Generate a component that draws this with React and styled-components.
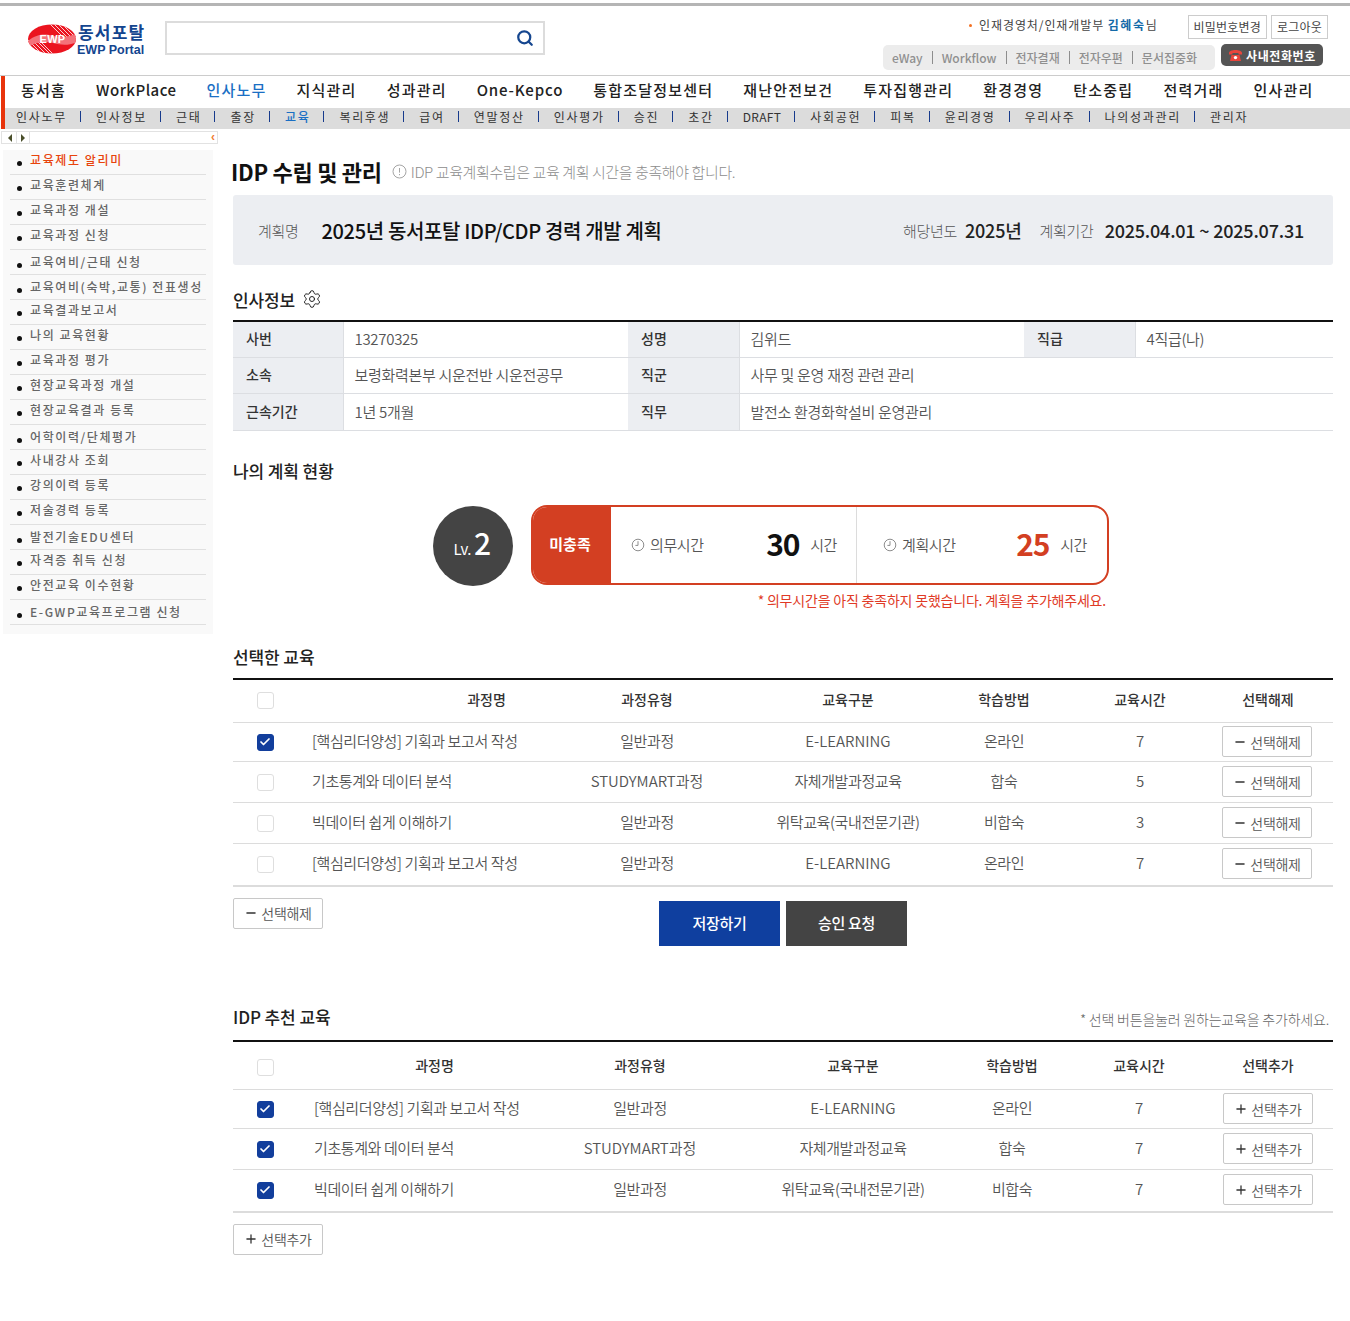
import React from 'react';
import styled, { createGlobalStyle } from 'styled-components';
import { Search, Settings, Check, Minus, Plus } from 'lucide-react';

const NOTO = `"Noto Sans CJK KR", "Noto Sans", sans-serif`;

const GlobalStyle = createGlobalStyle`
  html, body { margin: 0; padding: 0; background: #fff; }
  body { font-family: ${NOTO}; color: #333; }
  * { box-sizing: border-box; }
  table { border-collapse: collapse; }
`;

const Page = styled.div`
  width: 1350px;
  height: 1321px;
  overflow: hidden;
`;

/* header */
const Header = styled.header`
  height: 76px;
  border-top: 3px solid #fff;
  border-bottom: 1px solid #ccc;
  position: relative;
  display: flex;
  justify-content: space-between;
  &::before {
    content: '';
    position: absolute;
    left: 0;
    right: 0;
    top: 0;
    height: 3px;
    background: #b5b5b5;
  }
`;

const HeaderLeft = styled.div`
  display: flex;
  padding: 18px 0 0 28px;
`;

const Logo = styled.div`
  display: flex;
  width: 137px;
  height: 34px;
  margin-top: 3px;
`;

const LogoText = styled.div`
  display: flex;
  flex-direction: column;
  color: #13458f;
  font-weight: 700;
  font-family: "Liberation Sans", ${NOTO};
`;

const LogoKo = styled.span`
  font-family: ${NOTO};
  font-size: 17px;
  line-height: 20px;
  margin-top: -2px;
  margin-left: 1px;
  letter-spacing: 1.2px;
`;

const LogoEn = styled.span`
  font-size: 12.5px;
  line-height: 14px;
  margin-top: 1px;
  white-space: nowrap;
`;

const SearchBox = styled.div`
  width: 380px;
  height: 34px;
  border: 2px solid #dcdcdc;
  display: flex;
  align-items: center;
  justify-content: flex-end;
  padding-right: 9px;
  color: #15468f;
`;

const HeaderRight = styled.div`
  width: 400px;
  padding: 12px 22px 0 0;
  display: flex;
  flex-direction: column;
  align-items: flex-end;
`;

const UserLine = styled.div`
  display: flex;
  align-items: flex-start;
  height: 24px;
`;

const UserName = styled.div`
  font-size: 12px;
  line-height: 20px;
  color: #444;
  margin-right: 26px;
  letter-spacing: 0.9px;
  display: flex;
  align-items: center;
  &::before {
    content: '';
    width: 3px;
    height: 3px;
    border-radius: 50%;
    background: #f37021;
    margin-right: 7px;
  }
  b { color: #146aa8; font-weight: 700; letter-spacing: 1.6px; }
`;

const SmallBtn = styled.span`
  height: 24px;
  padding: 0 5px;
  margin-left: 4px;
  border: 1px solid #ccc;
  font-size: 12px;
  line-height: 22px;
  letter-spacing: 0.2px;
  color: #444;
  background: #fff;
  white-space: nowrap;
`;

const QuickLine = styled.div`
  display: flex;
  align-items: center;
  margin-top: 6px;
  margin-right: 5px;
`;

const QuickBar = styled.div`
  width: 332px;
  height: 25px;
  background: #ececec;
  border-radius: 5px;
  display: flex;
  align-items: center;
  padding-left: 9px;
  margin-right: 6px;
`;

const QuickItem = styled.span`
  font-size: 12px;
  font-weight: 500;
  color: #909090;
  white-space: nowrap;
  padding-right: 9px;
  margin-right: 9px;
  line-height: 13px;
  border-right: ${(p) => (p.$last ? 'none' : '1px solid #8d8d8d')};
`;

const PhoneBtn = styled.div`
  width: 102px;
  height: 22px;
  margin-top: -5px;
  background: #555;
  border-radius: 5px;
  color: #fff;
  font-size: 12px;
  font-weight: 700;
  letter-spacing: 0.6px;
  display: flex;
  align-items: center;
  padding-left: 7px;
  gap: 3px;
  white-space: nowrap;
`;

/* navigation */
const NavArea = styled.nav`
  margin-left: 1px;
  border-left: 4px solid #e8340c;
`;

const MainNav = styled.div`
  height: 32px;
  display: flex;
  align-items: center;
  padding: 0 0 5px 16px;
`;

const MainNavItem = styled.span`
  font-size: 15px;
  font-weight: 500;
  letter-spacing: ${(p) => p.$spacing}px;
  color: ${(p) => (p.$active ? '#1a6fc4' : '#222')};
  margin-right: 30px;
  white-space: nowrap;
  line-height: 24px;
`;

const SubNav = styled.div`
  height: 21px;
  background: #dcdcdc;
  display: flex;
  align-items: center;
  padding: 0 0 4px 11px;
`;

const SubNavItem = styled.span`
  font-size: 12px;
  letter-spacing: ${(p) => (p.$latin ? '0.3px' : '1.7px')};
  color: ${(p) => (p.$active ? '#1a6fc4' : '#333')};
  font-weight: ${(p) => (p.$active ? 500 : 400)};
  white-space: nowrap;
  line-height: 11px;
  padding-right: 13px;
  margin-right: 15px;
  border-right: ${(p) => (p.$last ? 'none' : '1px solid #173a8c')};
`;

/* body */
const Body = styled.div`
  display: flex;
  align-items: flex-start;
`;

const Aside = styled.aside`
  width: 233px;
  flex: none;
  padding: 2px 0 0 1px;
`;

const Toggle = styled.div`
  width: 217px;
  height: 13px;
  border: 1px solid #e2e2e2;
  display: flex;
  align-items: center;
  padding-left: 2px;
  position: relative;
`;

const ToggleCell = styled.span`
  width: 13px;
  height: 11px;
  display: flex;
  align-items: center;
  justify-content: center;
  border-right: 1px solid #e2e2e2;
`;

const ToggleArrow = styled.span`
  width: 0;
  height: 0;
  border-top: 4px solid transparent;
  border-bottom: 4px solid transparent;
  border-${(p) => (p.$left ? 'right' : 'left')}: 4px solid #4a4f2a;
`;

const Collapse = styled.span`
  position: absolute;
  right: 2px;
  top: -1px;
  font-size: 12px;
  font-weight: 700;
  line-height: 12px;
  color: #f07b32;
  font-family: "Liberation Sans", sans-serif;
`;

const SideMenu = styled.ul`
  list-style: none;
  margin: 6px 0 0 2px;
  padding: 0 7px 9px 7px;
  width: 210px;
  height: 484px;
  background: #f9f9f9;
`;

const SideItem = styled.li`
  height: 25px;
  border-bottom: 1px solid #e0e0e0;
  display: flex;
  align-items: center;
  font-size: 12px;
  font-weight: 500;
  letter-spacing: 1.6px;
  color: ${(p) => (p.$active ? '#e8430c' : '#666')};
  white-space: nowrap;
  padding: 0 0 ${(p) => (p.$low ? 1 : 5)}px 7px;
  &::before {
    content: '';
    width: 5px;
    height: 5px;
    border-radius: 50%;
    background: #111;
    margin: 8px 8px 0 0;
    flex: none;
  }
`;

const Main = styled.main`
  width: 1100px;
  padding-top: 18px;
`;

const TitleRow = styled.div`
  display: flex;
  align-items: center;
  height: 50px;
  margin-top: -1px;
`;

const Title = styled.h1`
  margin: 0 0 0 -2px;
  font-size: 22px;
  line-height: 50px;
  font-weight: 700;
  letter-spacing: -0.28px;
  color: #111;
`;

const TitleNote = styled.span`
  margin-left: 10px;
  font-size: 15px;
  font-weight: 300;
  color: #8d8d8d;
  letter-spacing: -0.4px;
  display: flex;
  align-items: center;
  gap: 4px;
`;

const PlanBox = styled.div`
  height: 70px;
  margin-top: -1px;
  background: #eceef2;
  border-radius: 3px;
  display: flex;
  align-items: center;
  padding: 0 29px 0 25px;
`;

const PlanLabel = styled.span`
  font-size: 15px;
  font-weight: 300;
  color: #555;
  letter-spacing: -0.3px;
  margin-right: ${(p) => p.$gap}px;
`;

const PlanName = styled.span`
  font-size: 20px;
  font-weight: 500;
  color: #111;
  letter-spacing: -0.35px;
  margin-right: auto;
`;

const PlanValue = styled.span`
  font-size: 18px;
  font-weight: 500;
  color: #222;
  letter-spacing: -0.2px;
  margin-right: ${(p) => p.$gap || 0}px;
`;

const SectionRow = styled.div`
  display: flex;
  align-items: center;
  justify-content: space-between;
  height: 24px;
  margin-top: ${(p) => p.$top}px;
  margin-bottom: ${(p) => p.$bottom}px;
`;

const SectionTitle = styled.h2`
  margin: 0;
  font-size: 17px;
  font-weight: 500;
  color: #222;
  letter-spacing: -0.1px;
  display: flex;
  align-items: center;
  gap: 7px;
`;

const SectionHint = styled.span`
  font-size: 14px;
  font-weight: 300;
  color: #666;
  margin: 4px 4px 0 0;
  letter-spacing: -0.2px;
`;

const InfoTable = styled.table`
  width: 1100px;
  table-layout: fixed;
  border-top: 2px solid #111;
  font-size: 14px;
  tr { border-bottom: 1px solid #dcdee2; }
  th {
    background: #eceef2;
    border-right: 1px solid #dcdee2;
    text-align: left;
    padding: 0 0 2px 13px;
    font-weight: 500;
    color: #333;
  }
  td {
    padding: 0 0 1px 11px;
    font-size: 15px;
    font-weight: 350;
    color: #555;
    letter-spacing: -0.3px;
  }
`;

const InfoRow = styled.tr`
  height: ${(p) => p.$h}px;
`;

const Status = styled.div`
  display: flex;
  margin: 22px 0 0 200px;
  height: 80px;
`;

const LevelBadge = styled.div`
  width: 80px;
  height: 80px;
  margin-top: 1px;
  border-radius: 50%;
  background: #444;
  color: #fff;
  display: flex;
  align-items: baseline;
  justify-content: center;
  padding: 14px 2px 0 0;
  font-size: 15px;
  font-weight: 400;
  letter-spacing: -0.5px;
  gap: 3px;
  b { font-size: 30px; font-weight: 500; line-height: 44px; }
`;

const StatusPanel = styled.div`
  margin-left: 18px;
  width: 578px;
  height: 80px;
  border: 2px solid #d33f22;
  border-radius: 16px;
  display: flex;
  overflow: hidden;
`;

const StatusLabel = styled.div`
  width: 78px;
  padding: 0 4px 3px 0;
  background: #d33f22;
  color: #fff;
  font-size: 15px;
  font-weight: 700;
  display: flex;
  align-items: center;
  justify-content: center;
`;

const StatusCell = styled.div`
  width: 245px;
  display: flex;
  align-items: center;
  padding: 0 19px 0 20px;
  & + & { width: auto; flex: 1; border-left: 1px solid #dcdcdc; padding-left: 26px; padding-right: 20px; }
`;

const StatusName = styled.span`
  font-size: 15px;
  font-weight: 350;
  color: #555;
  margin-left: 5px;
  margin-right: auto;
  letter-spacing: -0.4px;
`;

const StatusValue = styled.b`
  font-size: 30px;
  font-weight: 700;
  color: ${(p) => p.$color};
  letter-spacing: -1.2px;
  margin: -4px 11px 0 0;
  line-height: 40px;
`;

const StatusUnit = styled.span`
  font-size: 15px;
  font-weight: 350;
  color: #555;
  letter-spacing: -0.4px;
`;

const Warning = styled.p`
  margin: 4px 0 0;
  padding-right: 227px;
  text-align: right;
  font-size: 14px;
  font-weight: 400;
  line-height: 22px;
  color: #e03a26;
  letter-spacing: -0.2px;
`;

const DataTable = styled.table`
  width: 1100px;
  table-layout: fixed;
  border-top: 2px solid #111;
  border-bottom: 2px solid #dcdcdc;
  font-size: 14px;
`;

const HeadRow = styled.tr`
  height: ${(p) => p.$h}px;
  border-bottom: 1px solid #dcdcdc;
`;

const HeadCell = styled.th`
  padding: 0 0 ${(p) => p.$lift || 0}px ${(p) => p.$pad || 0}px;
  font-weight: 500;
  color: #333;
  text-align: center;
`;

const BodyRow = styled.tr`
  height: ${(p) => p.$h}px;
  & + & { border-top: 1px solid #dcdcdc; }
`;

const Cell = styled.td`
  padding: 0 0 3px ${(p) => p.$pad || 0}px;
  text-align: ${(p) => (p.$left ? 'left' : 'center')};
  font-size: 15px;
  font-weight: 350;
  color: #555;
  white-space: nowrap;
  letter-spacing: ${(p) => (/[A-Z]{3}/.test(p.children) ? '0' : '-0.4px')};
`;

const CheckCell = styled.td`
  padding: 0;
  text-align: center;
  line-height: 0;
  font-size: 0;
`;

const ActionCell = styled.td`
  padding: 0 ${(p) => p.$right || 0}px 1px 0;
  text-align: center;
  white-space: nowrap;
`;

const CheckBox = styled.span`
  display: inline-flex;
  align-items: center;
  justify-content: center;
  vertical-align: middle;
  width: 17px;
  height: 17px;
  margin-left: -1px;
  border-radius: 3px;
  border: 1px solid ${(p) => (p.$on ? '#123e9c' : '#dedede')};
  background: ${(p) => (p.$on ? '#123e9c' : '#fff')};
  color: #fff;
`;

const OutlineBtn = styled.button`
  width: 90px;
  height: 31px;
  padding: 0;
  border: 1px solid #c8c8c8;
  border-radius: 2px;
  background: #fff;
  font-family: ${NOTO};
  font-size: 14px;
  font-weight: 350;
  color: #555;
  letter-spacing: -0.3px;
  display: inline-flex;
  align-items: center;
  justify-content: center;
  gap: 3px;
  vertical-align: middle;
  svg { color: #333; }
`;

const ActionRow = styled.div`
  height: 48px;
  margin-top: 11px;
  position: relative;
  display: flex;
  justify-content: center;
  gap: 6px;
  padding: 3px 0 0 0;
`;

const FloatLeft = styled.div`
  position: absolute;
  left: 0;
  top: 0;
`;

const BigBtn = styled.button`
  width: 121px;
  height: 45px;
  border: 0;
  background: ${(p) => p.$bg};
  color: #fff;
  font-family: ${NOTO};
  font-size: 15px;
  font-weight: 500;
  letter-spacing: -0.3px;
  padding: 0 0 2px;
`;

const FootRow = styled.div`
  margin-top: 11px;
`;

const selected = [
  ['[핵심리더양성] 기획과 보고서 작성', '일반과정', 'E-LEARNING', '온라인', '7', true],
  ['기초통계와 데이터 분석', 'STUDYMART과정', '자체개발과정교육', '합숙', '5', false],
  ['빅데이터 쉽게 이해하기', '일반과정', '위탁교육(국내전문기관)', '비합숙', '3', false],
  ['[핵심리더양성] 기획과 보고서 작성', '일반과정', 'E-LEARNING', '온라인', '7', false],
];

const recommended = [
  ['[핵심리더양성] 기획과 보고서 작성', '일반과정', 'E-LEARNING', '온라인', '7'],
  ['기초통계와 데이터 분석', 'STUDYMART과정', '자체개발과정교육', '합숙', '7'],
  ['빅데이터 쉽게 이해하기', '일반과정', '위탁교육(국내전문기관)', '비합숙', '7'],
];

const mainMenu = [
  ['동서홈', 1.2], ['WorkPlace', 0.5], ['인사노무', 1.2], ['지식관리', 1.2], ['성과관리', 1.2],
  ['One-Kepco', 0.85], ['통합조달정보센터', 1.2], ['재난안전보건', 1.2], ['투자집행관리', 1.2],
  ['환경경영', 1.2], ['탄소중립', 1.2], ['전력거래', 1.2], ['인사관리', 1.2],
];
const subMenu = ['인사노무', '인사정보', '근태', '출장', '교육', '복리후생', '급여', '연말정산', '인사평가', '승진', '초간', 'DRAFT', '사회공헌', '피복', '윤리경영', '우리사주', '나의성과관리', '관리자'];
const sideMenu = ['교육제도 알리미', '교육훈련체계', '교육과정 개설', '교육과정 신청', '교육여비/근태 신청', '교육여비(숙박,교통) 전표생성', '교육결과보고서', '나의 교육현황', '교육과정 평가', '현장교육과정 개설', '현장교육결과 등록', '어학이력/단체평가', '사내강사 조회', '강의이력 등록', '저술경력 등록', '발전기술EDU센터', '자격증 취득 신청', '안전교육 이수현황', 'E-GWP교육프로그램 신청'];
// 화면에서 2px 아래로 내려앉은 항목들
const lowSideItems = [4, 5, 11, 15, 18];

function LogoMark() {
  return (
    <svg width="49" height="30" viewBox="0 0 49 30" style={{ flex: 'none' }}>
      <clipPath id="logoClip"><ellipse cx="24" cy="15" rx="24" ry="14.5" /></clipPath>
      <g clipPath="url(#logoClip)">
        <rect width="49" height="30" fill="#ec1420" />
        <path d="M22 0 L36 14 M26 0 L40 14 M30 0 L44 14 M34 0 L48 14 M38 0 L49 11 M4 16 L18 30 M8 16 L22 30 M0 16 L14 30 M12 17 L25 30" stroke="#fff" strokeWidth="1" opacity="0.8" />
        <path d="M0 17 C10 9 18 10 26 12 C34 14 42 13 49 9 V18 C40 22 33 21 25 19 C16 17 8 18 0 23Z" fill="#f4727a" />
        <text x="24.5" y="19" textAnchor="middle" fontFamily="Liberation Sans, sans-serif" fontSize="11" fontWeight="700" fill="#fff" letterSpacing="0.3">EWP</text>
      </g>
    </svg>
  );
}

function Clock() {
  return (
    <svg width="14" height="14" viewBox="0 0 14 14" fill="none" stroke="#8d8d8d" strokeWidth="1" style={{ flex: 'none' }}>
      <circle cx="7" cy="7" r="5.8" />
      <path d="M7 3.2 V7.4 H4.4" />
    </svg>
  );
}

function InfoIcon() {
  return (
    <svg width="15" height="15" viewBox="0 0 15 15" fill="none" stroke="#a5a5a5" style={{ flex: 'none' }}>
      <circle cx="7.5" cy="7.5" r="6.5" />
      <path d="M7.5 4 V8.6 M7.5 10 V11.2" />
    </svg>
  );
}

function PhoneIcon() {
  return (
    <svg width="15" height="14" viewBox="0 0 15 14" style={{ flex: 'none' }}>
      <path d="M1 5 C1 1 14 1 14 5 V6.5 H10.5 V5 H4.5 V6.5 H1Z" fill="#e8453c" />
      <path d="M3.5 7 H11.5 L13 13 H2Z" fill="#e8453c" />
      <circle cx="7.5" cy="9.6" r="1.7" fill="#fff" />
    </svg>
  );
}

function App() {
  return (
    <Page>
      <GlobalStyle />
      <Header>
        <HeaderLeft>
          <Logo>
            <LogoMark />
            <LogoText>
              <LogoKo>동서포탈</LogoKo>
              <LogoEn>EWP Portal</LogoEn>
            </LogoText>
          </Logo>
          <SearchBox>
            <Search size={18} strokeWidth={3} />
          </SearchBox>
        </HeaderLeft>
        <HeaderRight>
          <UserLine>
            <UserName>인재경영처/인재개발부&nbsp;<b>김혜숙</b>님</UserName>
            <SmallBtn>비밀번호변경</SmallBtn>
            <SmallBtn>로그아웃</SmallBtn>
          </UserLine>
          <QuickLine>
            <QuickBar>
              <QuickItem>eWay</QuickItem>
              <QuickItem>Workflow</QuickItem>
              <QuickItem>전자결재</QuickItem>
              <QuickItem>전자우편</QuickItem>
              <QuickItem $last>문서집중화</QuickItem>
            </QuickBar>
            <PhoneBtn><PhoneIcon />사내전화번호</PhoneBtn>
          </QuickLine>
        </HeaderRight>
      </Header>

      <NavArea>
        <MainNav>
          {mainMenu.map(([m, spacing]) => (
            <MainNavItem key={m} $active={m === '인사노무'} $spacing={spacing}>{m}</MainNavItem>
          ))}
        </MainNav>
        <SubNav>
          {subMenu.map((m, i) => (
            <SubNavItem key={m} $active={m === '교육'} $latin={m === 'DRAFT'} $last={i === subMenu.length - 1}>{m}</SubNavItem>
          ))}
        </SubNav>
      </NavArea>

      <Body>
        <Aside>
          <Toggle>
            <ToggleCell><ToggleArrow $left /></ToggleCell>
            <ToggleCell><ToggleArrow /></ToggleCell>
            <Collapse>‹</Collapse>
          </Toggle>
          <SideMenu>
            {sideMenu.map((m, i) => (
              <SideItem key={m} $active={i === 0} $low={lowSideItems.includes(i)}>{m}</SideItem>
            ))}
          </SideMenu>
        </Aside>

        <Main>
          <TitleRow>
            <Title>IDP 수립 및 관리</Title>
            <TitleNote><InfoIcon />IDP 교육계획수립은 교육 계획 시간을 충족해야 합니다.</TitleNote>
          </TitleRow>

          <PlanBox>
            <PlanLabel $gap={23}>계획명</PlanLabel>
            <PlanName>2025년 동서포탈 IDP/CDP 경력 개발 계획</PlanName>
            <PlanLabel $gap={8}>해당년도</PlanLabel>
            <PlanValue $gap={18}>2025년</PlanValue>
            <PlanLabel $gap={11}>계획기간</PlanLabel>
            <PlanValue>2025.04.01 ~ 2025.07.31</PlanValue>
          </PlanBox>

          <SectionRow $top={22} $bottom={9}>
            <SectionTitle>인사정보 <Settings size={20} strokeWidth={1.2} /></SectionTitle>
          </SectionRow>
          <InfoTable>
            <colgroup>
              <col width="110" />
              <col width="285" />
              <col width="111" />
              <col width="285" />
              <col width="111" />
              <col width="198" />
            </colgroup>
            <tbody>
              <InfoRow $h={36}>
                <th>사번</th>
                <td>13270325</td>
                <th>성명</th>
                <td>김위드</td>
                <th>직급</th>
                <td>4직급(나)</td>
              </InfoRow>
              <InfoRow $h={36}>
                <th>소속</th>
                <td>보령화력본부 시운전반 시운전공무</td>
                <th>직군</th>
                <td colSpan={3}>사무 및 운영 재정 관련 관리</td>
              </InfoRow>
              <InfoRow $h={37}>
                <th>근속기간</th>
                <td>1년 5개월</td>
                <th>직무</th>
                <td colSpan={3}>발전소 환경화학설비 운영관리</td>
              </InfoRow>
            </tbody>
          </InfoTable>

          <SectionRow $top={28} $bottom={0}>
            <SectionTitle>나의 계획 현황</SectionTitle>
          </SectionRow>
          <Status>
            <LevelBadge>Lv.<b>2</b></LevelBadge>
            <StatusPanel>
              <StatusLabel>미충족</StatusLabel>
              <StatusCell>
                <Clock />
                <StatusName>의무시간</StatusName>
                <StatusValue $color="#111">30</StatusValue>
                <StatusUnit>시간</StatusUnit>
              </StatusCell>
              <StatusCell>
                <Clock />
                <StatusName>계획시간</StatusName>
                <StatusValue $color="#d33f22">25</StatusValue>
                <StatusUnit>시간</StatusUnit>
              </StatusCell>
            </StatusPanel>
          </Status>
          <Warning>* 의무시간을 아직 충족하지 못했습니다. 계획을 추가해주세요.</Warning>

          <SectionRow $top={34} $bottom={9}>
            <SectionTitle>선택한 교육</SectionTitle>
          </SectionRow>
          <DataTable>
            <colgroup>
              <col width="65" />
              <col width="231" />
              <col width="236" />
              <col width="166" />
              <col width="146" />
              <col width="126" />
              <col width="130" />
            </colgroup>
            <thead>
              <HeadRow $h={44}>
                <HeadCell $lift={4}><CheckBox /></HeadCell>
                <HeadCell $lift={4} $pad={146}>과정명</HeadCell>
                <HeadCell $lift={4}>과정유형</HeadCell>
                <HeadCell $lift={4}>교육구분</HeadCell>
                <HeadCell $lift={4}>학습방법</HeadCell>
                <HeadCell $lift={4}>교육시간</HeadCell>
                <HeadCell $lift={4}>선택해제</HeadCell>
              </HeadRow>
            </thead>
            <tbody>
              {selected.map((r, i) => (
                <BodyRow key={i} $h={i === 0 ? 39 : i === 3 ? 42 : 41}>
                  <CheckCell>
                    <CheckBox $on={r[5]}>{r[5] && <Check size={12} strokeWidth={3.5} />}</CheckBox>
                  </CheckCell>
                  <Cell $left $pad={14}>{r[0]}</Cell>
                  <Cell>{r[1]}</Cell>
                  <Cell>{r[2]}</Cell>
                  <Cell>{r[3]}</Cell>
                  <Cell>{r[4]}</Cell>
                  <ActionCell $right={2}><OutlineBtn><Minus size={14} strokeWidth={2.2} />선택해제</OutlineBtn></ActionCell>
                </BodyRow>
              ))}
            </tbody>
          </DataTable>
          <ActionRow>
            <FloatLeft><OutlineBtn><Minus size={14} strokeWidth={2.2} />선택해제</OutlineBtn></FloatLeft>
            <BigBtn $bg="#0f3f9f">저장하기</BigBtn>
            <BigBtn $bg="#444">승인 요청</BigBtn>
          </ActionRow>

          <SectionRow $top={59} $bottom={11}>
            <SectionTitle>IDP 추천 교육</SectionTitle>
            <SectionHint>* 선택 버튼을눌러 원하는교육을 추가하세요.</SectionHint>
          </SectionRow>
          <DataTable>
            <colgroup>
              <col width="65" />
              <col width="225" />
              <col width="234" />
              <col width="192" />
              <col width="126" />
              <col width="128" />
              <col width="130" />
            </colgroup>
            <thead>
              <HeadRow $h={49}>
                <HeadCell><CheckBox /></HeadCell>
                <HeadCell $pad={48}>과정명</HeadCell>
                <HeadCell>과정유형</HeadCell>
                <HeadCell>교육구분</HeadCell>
                <HeadCell>학습방법</HeadCell>
                <HeadCell>교육시간</HeadCell>
                <HeadCell>선택추가</HeadCell>
              </HeadRow>
            </thead>
            <tbody>
              {recommended.map((r, i) => (
                <BodyRow key={i} $h={i === 0 ? 39 : i === 2 ? 42 : 41}>
                  <CheckCell>
                    <CheckBox $on><Check size={12} strokeWidth={3.5} /></CheckBox>
                  </CheckCell>
                  <Cell $left $pad={16}>{r[0]}</Cell>
                  <Cell>{r[1]}</Cell>
                  <Cell>{r[2]}</Cell>
                  <Cell>{r[3]}</Cell>
                  <Cell>{r[4]}</Cell>
                  <ActionCell><OutlineBtn><Plus size={14} strokeWidth={2.2} />선택추가</OutlineBtn></ActionCell>
                </BodyRow>
              ))}
            </tbody>
          </DataTable>
          <FootRow>
            <OutlineBtn><Plus size={14} strokeWidth={2.2} />선택추가</OutlineBtn>
          </FootRow>
        </Main>
      </Body>
    </Page>
  );
}

export default App;
